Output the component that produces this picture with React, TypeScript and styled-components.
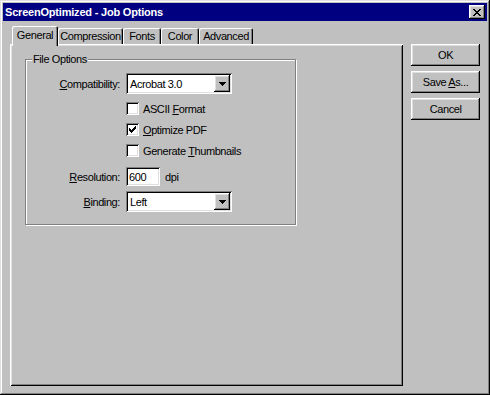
import React from "react";
import styled, { createGlobalStyle } from "styled-components";

const GlobalStyle = createGlobalStyle`
  html, body {
    margin: 0;
    padding: 0;
    background: #c0c0c0;
  }
  body {
    font-family: "Liberation Sans", Arial, sans-serif;
    font-size: 11px;
    letter-spacing: -0.4px;
    color: #000;
  }
`;

const raised =
  "inset -1px -1px #000, inset 1px 1px #fff, inset -2px -2px #808080, inset 2px 2px #dfdfdf";
const sunken =
  "inset 1px 1px #808080, inset -1px -1px #fff, inset 2px 2px #000, inset -2px -2px #dfdfdf";

const Window = styled.div`
  box-sizing: border-box;
  width: 490px;
  height: 395px;
  padding: 3px;
  background: #c0c0c0;
  box-shadow: inset -1px -1px #000, inset 1px 1px #dfdfdf,
    inset -2px -2px #808080, inset 2px 2px #fff;
  display: flex;
  flex-direction: column;
`;

const TitleBar = styled.div`
  height: 18px;
  flex: none;
  background: #000080;
  display: flex;
  align-items: center;
  justify-content: space-between;
  padding: 0 2px;
`;

const Title = styled.span`
  color: #fff;
  font-weight: bold;
  font-size: 11px;
  letter-spacing: -0.2px;
`;

const CloseButton = styled.div`
  width: 16px;
  height: 14px;
  background: #c0c0c0;
  box-shadow: ${raised};
  display: flex;
  align-items: center;
  justify-content: center;
`;

const Body = styled.div`
  flex: 1;
  display: flex;
  gap: 8px;
  padding: 5px 7px 6px 7px;
`;

const LeftColumn = styled.div`
  width: 394px;
  display: flex;
  flex-direction: column;
`;

const TabStrip = styled.div`
  height: 18px;
  display: flex;
  align-items: flex-end;
  padding-left: 2px;
`;

const Tab = styled.div<{ $width: number; $active?: boolean }>`
  box-sizing: border-box;
  width: ${(p) => p.$width}px;
  height: ${(p) => (p.$active ? 20 : 16)}px;
  margin-bottom: ${(p) => (p.$active ? -2 : 0)}px;
  position: relative;
  z-index: ${(p) => (p.$active ? 1 : 0)};
  background: #c0c0c0;
  border-radius: 2px 2px 0 0;
  box-shadow: inset 1px 1px #fff, inset -1px 0 #000, inset -2px 0 #808080;
  display: flex;
  align-items: ${(p) => (p.$active ? "flex-start" : "center")};
  padding-top: ${(p) => (p.$active ? 3 : 0)}px;
  justify-content: center;
  white-space: nowrap;
`;

const Panel = styled.div`
  flex: 1;
  box-sizing: border-box;
  background: #c0c0c0;
  box-shadow: inset 1px 1px #fff, inset -1px -1px #000, inset 2px 2px #dfdfdf,
    inset -2px -2px #808080;
  padding: 15px 0 0 15px;
`;

const GroupBox = styled.div`
  box-sizing: border-box;
  width: 271px;
  height: 166px;
  border: 1px solid #808080;
  box-shadow: inset 1px 1px #fff, 1px 1px #fff;
  display: flex;
  flex-direction: column;
`;

const GroupTitle = styled.span`
  align-self: flex-start;
  margin: -7px 0 0 6px;
  padding: 0 1px;
  line-height: 13px;
  background: #c0c0c0;
`;

const Field = styled.div<{ $top: number; $height?: number }>`
  display: flex;
  align-items: center;
  gap: 6px;
  margin-top: ${(p) => p.$top}px;
  height: ${(p) => p.$height ?? 21}px;
`;

const Label = styled.span`
  width: 94px;
  text-align: right;
  white-space: nowrap;
`;

const Select = styled.div<{ $width: number }>`
  box-sizing: border-box;
  width: ${(p) => p.$width}px;
  height: 21px;
  background: #fff;
  box-shadow: ${sunken};
  padding: 2px 2px 2px 4px;
  display: flex;
  align-items: center;
  justify-content: space-between;
`;

const DropButton = styled.div`
  width: 16px;
  height: 17px;
  background: #c0c0c0;
  box-shadow: ${raised};
  display: flex;
  align-items: center;
  justify-content: center;
`;

const TextInput = styled.div`
  box-sizing: border-box;
  width: 34px;
  height: 19px;
  background: #fff;
  box-shadow: ${sunken};
  padding: 0 3px;
  display: flex;
  align-items: center;
`;

const Unit = styled.span`
  margin-left: -1px;
`;

const CheckRow = styled(Field)`
  padding-left: 100px;
  gap: 4px;
`;

const CheckBox = styled.div`
  width: 13px;
  height: 13px;
  background: #fff;
  box-shadow: ${sunken};
  display: flex;
  align-items: center;
  justify-content: center;
`;

const ButtonColumn = styled.div`
  width: 69px;
  padding-top: 18px;
  display: flex;
  flex-direction: column;
  gap: 5px;
`;

const Button = styled.div`
  height: 22px;
  background: #c0c0c0;
  box-shadow: ${raised};
  display: flex;
  align-items: center;
  justify-content: center;
`;

const Arrow = () => (
  <svg width="7" height="4" viewBox="0 0 7 4" shapeRendering="crispEdges">
    <path d="M0 0h7v1H0zM1 1h5v1H1zM2 2h3v1H2zM3 3h1v1H3z" fill="#000" />
  </svg>
);

const Check = () => (
  <svg width="7" height="7" viewBox="0 0 7 7" shapeRendering="crispEdges">
    <path
      d="M6 0h1v3H6zM5 1h1v3H5zM4 2h1v3H4zM3 3h1v3H3zM2 4h1v3H2zM1 3h1v3H1zM0 2h1v3H0z"
      fill="#000"
    />
  </svg>
);

const CloseGlyph = () => (
  <svg width="8" height="7" viewBox="0 0 8 7" shapeRendering="crispEdges">
    <path
      d="M0 0h2v1H0zM6 0h2v1H6zM1 1h2v1H1zM5 1h2v1H5zM2 2h4v1H2zM3 3h2v1H3zM2 4h4v1H2zM1 5h2v1H1zM5 5h2v1H5zM0 6h2v1H0zM6 6h2v1H6z"
      fill="#000"
    />
  </svg>
);

const tabs = [
  { name: "General", width: 46 },
  { name: "Compression", width: 65 },
  { name: "Fonts", width: 38 },
  { name: "Color", width: 38 },
  { name: "Advanced", width: 54 },
];

const checks = [
  { before: "ASCII ", key: "F", after: "ormat", checked: false },
  { before: "", key: "O", after: "ptimize PDF", checked: true },
  { before: "Generate ", key: "T", after: "humbnails", checked: false },
];

const App = () => {
  return (
    <Window>
      <GlobalStyle />
      <TitleBar>
        <Title>ScreenOptimized - Job Options</Title>
        <CloseButton>
          <CloseGlyph />
        </CloseButton>
      </TitleBar>
      <Body>
        <LeftColumn>
          <TabStrip>
            {tabs.map((tab, i) => (
              <Tab key={tab.name} $width={tab.width} $active={i === 0}>
                {tab.name}
              </Tab>
            ))}
          </TabStrip>
          <Panel>
            <GroupBox>
              <GroupTitle>File Options</GroupTitle>
              <Field $top={7}>
                <Label>
                  <u>C</u>ompatibility:
                </Label>
                <Select $width={106}>
                  Acrobat 3.0
                  <DropButton>
                    <Arrow />
                  </DropButton>
                </Select>
              </Field>
              {checks.map((c, i) => (
                <CheckRow key={c.key} $top={i === 0 ? 4 : 0}>
                  <CheckBox>{c.checked && <Check />}</CheckBox>
                  <span>
                    {c.before}
                    <u>{c.key}</u>
                    {c.after}
                  </span>
                </CheckRow>
              ))}
              <Field $top={6} $height={19}>
                <Label>
                  <u>R</u>esolution:
                </Label>
                <TextInput>600</TextInput>
                <Unit>dpi</Unit>
              </Field>
              <Field $top={5}>
                <Label>
                  <u>B</u>inding:
                </Label>
                <Select $width={106}>
                  Left
                  <DropButton>
                    <Arrow />
                  </DropButton>
                </Select>
              </Field>
            </GroupBox>
          </Panel>
        </LeftColumn>
        <ButtonColumn>
          <Button>OK</Button>
          <Button>
            <span>
              Save <u>A</u>s...
            </span>
          </Button>
          <Button>Cancel</Button>
        </ButtonColumn>
      </Body>
    </Window>
  );
};

export default App;
